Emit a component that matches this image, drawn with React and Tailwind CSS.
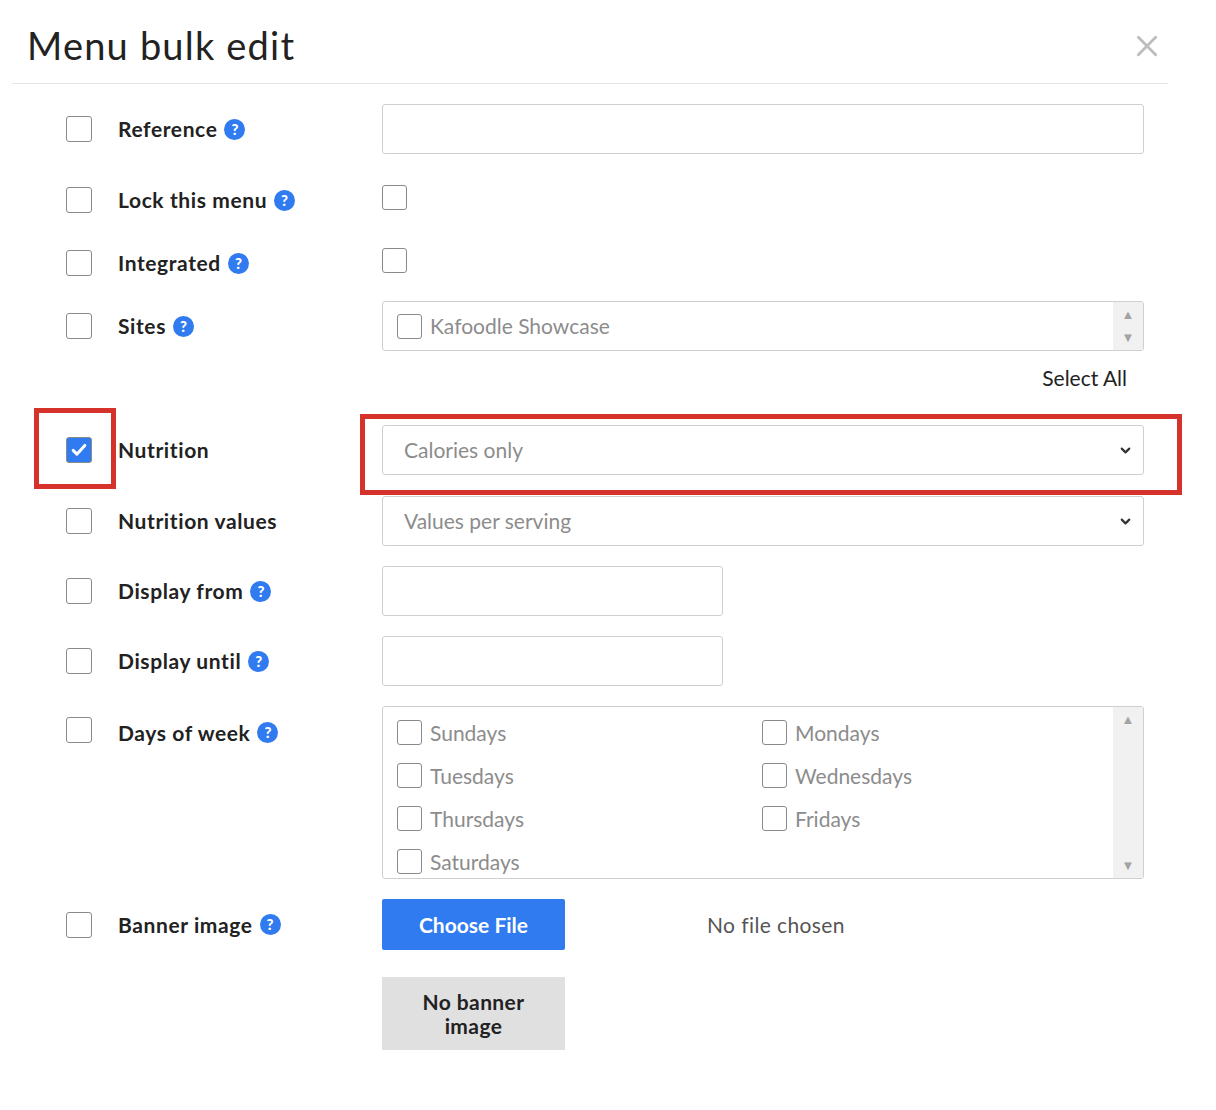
const font = { fontFamily: 'Lato, "Open Sans", sans-serif' };

function Help() {
  return (
    <span className="ml-[7px] inline-flex h-[21px] w-[21px] items-center justify-center rounded-full bg-[#2f7bef] text-[15px] font-black leading-none tracking-normal text-white">?</span>
  );
}

function Box({ checked, small }) {
  return (
    <span
      className={`inline-flex shrink-0 items-center justify-center rounded-[3px] border ${small ? 'h-[25px] w-[25px] border-[#8a8a8a]' : 'h-[26px] w-[26px] border-[#8a8a8a]'} ${checked ? 'border-[#2f7bef] bg-[#2f7bef]' : 'bg-white'}`}
    >
      {checked && (
        <svg width="20" height="20" viewBox="0 0 24 24" fill="none" stroke="white" strokeWidth="3.6" strokeLinecap="round" strokeLinejoin="round">
          <path d="M5 12.5l4.5 4.5L19 6.5" />
        </svg>
      )}
    </span>
  );
}

function Row({ label, help, checked, h = 50, mt, children, top }) {
  return (
    <div className={`flex ${top ? 'items-start' : 'items-center'}`} style={{ marginTop: mt }}>
      <div className={`flex w-[382px] shrink-0 pl-[66px] ${top ? 'items-start pt-[11px]' : 'items-center'}`} style={{ minHeight: top ? undefined : h }}>
        <Box checked={checked} />
        <span className="ml-[26px] flex items-center text-[21px] font-bold tracking-[0.6px] text-[#222]">
          {label}
          {help && <Help />}
        </span>
      </div>
      <div className="w-[762px]">{children}</div>
    </div>
  );
}

const field = 'h-[50px] rounded-[3px] border border-[#cfcfcf] bg-white';

function Chevron() {
  return (
    <svg width="15" height="15" viewBox="0 0 24 24" fill="none" stroke="#333" strokeWidth="3.5" strokeLinecap="round" strokeLinejoin="round">
      <path d="M6 9l6 6 6-6" />
    </svg>
  );
}

function Scroll() {
  return (
    <div className="flex w-[30px] flex-col items-center justify-between bg-[#f1f1f1] py-[6px]">
      <span className="text-[13px] leading-none text-[#a3a3a3]">▲</span>
      <span className="text-[13px] leading-none text-[#a3a3a3]">▼</span>
    </div>
  );
}

function Day({ label }) {
  return (
    <div className="flex h-[43px] items-center gap-[8px]">
      <Box small />
      <span className="text-[21px] text-[#8c8c8c]">{label}</span>
    </div>
  );
}

export default function App() {
  return (
    <div className="h-[1110px] w-[1216px] bg-white" style={font}>
      <div className="mx-[12px] flex h-[84px] w-[1156px] items-center justify-between border-b border-[#e5e5e5] pl-[15px] pr-[8px] pt-[8px]">
        <h1 className="text-[38px] font-normal tracking-[1.2px] text-[#222]">Menu bulk edit</h1>
        <svg width="26" height="26" viewBox="0 0 24 24" fill="none" stroke="#bdbdbd" strokeWidth="2.6" strokeLinecap="round">
          <path d="M4 4l16 16M20 4L4 20" />
        </svg>
      </div>

      <Row label="Reference" help mt={20}>
        <div className={field} />
      </Row>
      <Row label="Lock this menu" help mt={21}>
        <Box small />
      </Row>
      <Row label="Integrated" help mt={13}>
        <Box small />
      </Row>
      <Row label="Sites" help mt={13}>
        <div className={`${field} flex overflow-hidden`}>
          <div className="flex flex-1 items-center gap-[8px] pl-[14px]">
            <Box small />
            <span className="text-[21px] text-[#8c8c8c]">Kafoodle Showcase</span>
          </div>
          <Scroll />
        </div>
      </Row>
      <div className="flex h-[54px] w-[1127px] items-center justify-end text-[21px] text-[#222]">Select All</div>

      <div className="relative" style={{ marginTop: 20 }}>
        <Row label="Nutrition" checked>
          <div className={`${field} flex items-center justify-between pl-[21px] pr-[10px]`}>
            <span className="text-[21px] text-[#8c8c8c]">Calories only</span>
            <Chevron />
          </div>
        </Row>
        <div className="pointer-events-none absolute left-[34px] top-[-17px] h-[81px] w-[82px] border-[5px] border-[#d6322c]" />
        <div className="pointer-events-none absolute left-[360px] top-[-11px] h-[81px] w-[822px] border-[5px] border-[#d6322c]" />
      </div>

      <Row label="Nutrition values" mt={21}>
        <div className={`${field} flex items-center justify-between pl-[21px] pr-[10px]`}>
          <span className="text-[21px] text-[#8c8c8c]">Values per serving</span>
          <Chevron />
        </div>
      </Row>
      <Row label="Display from" help mt={20}>
        <div className={`${field} w-[341px]`} />
      </Row>
      <Row label="Display until" help mt={20}>
        <div className={`${field} w-[341px]`} />
      </Row>
      <Row label="Days of week" help mt={20} top>
        <div className="flex h-[173px] overflow-hidden rounded-[3px] border border-[#cfcfcf]">
          <div className="grid flex-1 grid-cols-[365px_1fr] content-start pl-[14px] pt-[4px]">
            <Day label="Sundays" />
            <Day label="Mondays" />
            <Day label="Tuesdays" />
            <Day label="Wednesdays" />
            <Day label="Thursdays" />
            <Day label="Fridays" />
            <Day label="Saturdays" />
          </div>
          <Scroll />
        </div>
      </Row>
      <Row label="Banner image" help mt={20}>
        <div className="flex items-center">
          <button className="h-[51px] w-[183px] rounded-[2px] bg-[#2f7bef] text-[21px] font-bold text-white">Choose File</button>
          <span className="ml-[142px] text-[21px] tracking-[0.4px] text-[#555]">No file chosen</span>
        </div>
      </Row>
      <div className="ml-[382px] mt-[27px] flex h-[73px] w-[183px] items-center justify-center bg-[#e0e0e0] text-center text-[21px] font-bold leading-[24px] tracking-[0.4px] text-[#222]">
        No banner<br />image
      </div>
    </div>
  );
}
